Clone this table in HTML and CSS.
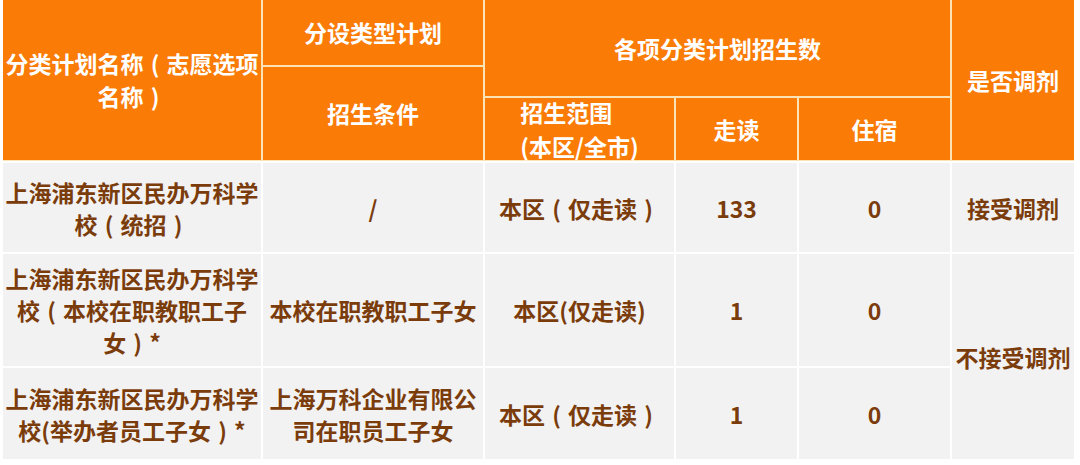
FILE: index.html
```html
<!DOCTYPE html>
<html lang="zh">
<head>
<meta charset="utf-8">
<title>分类计划</title>
<link rel="stylesheet" href="styles.css">
</head>
<body>
<div class="table">
  <div class="head">
    <div class="hc c1"><span>分类计划名称<span class="fp">(</span>志愿选项<br>名称<span class="fp">)</span></span></div>
    <div class="hc c2a">分设类型计划</div>
    <div class="hc c2b">招生条件</div>
    <div class="hc grp">各项分类计划招生数</div>
    <div class="hc c6">是否调剂</div>
    <div class="hc sub"><span class="blk">招生范围<br>(本区/全市)</span></div>
    <div class="hc sub">走读</div>
    <div class="hc sub">住宿</div>
  </div>
  <div class="body">
    <div class="bc r1"><span>上海浦东新区民办万科学<br>校<span class="fp">(</span>统招<span class="fp">)</span></span></div>
    <div class="bc r1">/</div>
    <div class="bc r1"><span>本区<span class="fp">(</span>仅走读<span class="fp">)</span></span></div>
    <div class="bc r1">133</div>
    <div class="bc r1">0</div>
    <div class="bc r1">接受调剂</div>

    <div class="bc"><span>上海浦东新区民办万科学<br>校<span class="fp">(</span>本校在职教职工子<br>女<span class="fp">)</span>*</span></div>
    <div class="bc">本校在职教职工子女</div>
    <div class="bc">本区(仅走读)</div>
    <div class="bc">1</div>
    <div class="bc">0</div>
    <div class="bc span2">不接受调剂</div>

    <div class="bc"><span>上海浦东新区民办万科学<br>校(举办者员工子女<span class="fp">)</span>*</span></div>
    <div class="bc"><span>上海万科企业有限公<br>司在职员工子女</span></div>
    <div class="bc"><span>本区<span class="fp">(</span>仅走读<span class="fp">)</span></span></div>
    <div class="bc">1</div>
    <div class="bc">0</div>
  </div>
</div>
</body>
</html>
```

FILE: styles.css
```css
* { box-sizing: border-box; }
html, body {
  margin: 0;
  padding: 0;
  background: #ffffff;
}
body {
  font-family: "Noto Sans CJK SC", "Noto Sans", sans-serif;
  font-size: 23px;
  font-weight: 700;
}
.table {
  padding-left: 3px;
  width: 1080px;
}
.head, .body {
  display: grid;
  grid-template-columns: 258px 220px 189px 121px 151px 122px;
  column-gap: 2px;
  row-gap: 2px;
  width: 1071px;
}
.head {
  grid-template-rows: 65px 29px 62px;
  background: #fce3b6;
  padding-bottom: 1px;
}
.body {
  grid-template-rows: 89px 112px 91px;
  background: #ffffff;
  margin-top: 2px;
}
.hc {
  background: #fa7b06;
  color: #ffffff;
  display: flex;
  align-items: center;
  justify-content: center;
  text-align: center;
  line-height: 33px;
}
.c1 { grid-column: 1; grid-row: 1 / 4; }
.c2a { grid-column: 2; grid-row: 1; }
.c2b { grid-column: 2; grid-row: 2 / 4; }
.grp { grid-column: 3 / 6; grid-row: 1 / 3; }
.c6 { grid-column: 6; grid-row: 1 / 4; }
.sub { grid-row: 3; }
.blk {
  display: inline-block;
  text-align: left;
  line-height: 34px;
}
.fp {
  display: inline-block;
  width: 1em;
  text-align: center;
}
.bc {
  background: #f2f2f2;
  color: #7b3c0c;
  display: flex;
  align-items: center;
  justify-content: center;
  text-align: center;
  line-height: 32px;
}
.span2 {
  grid-column: 6;
  grid-row: 2 / 4;
}
```
